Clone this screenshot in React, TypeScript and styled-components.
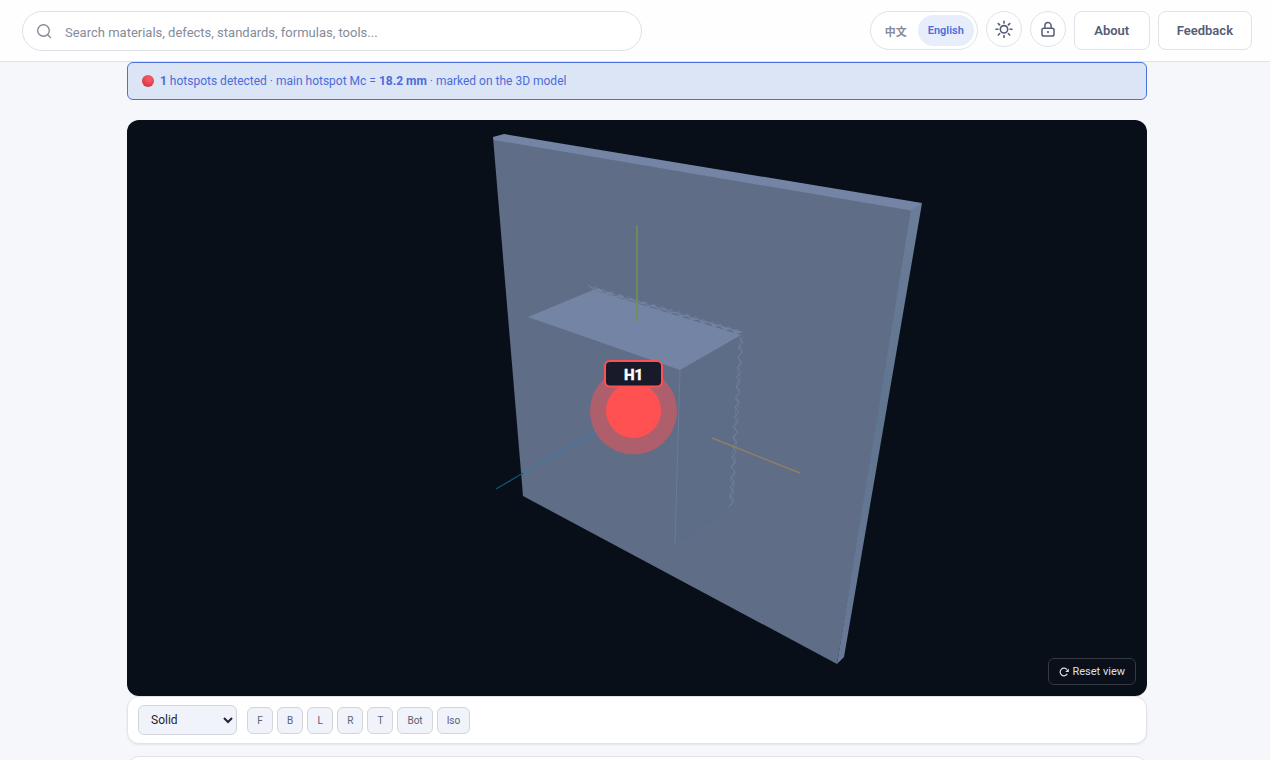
import React from 'react';
import styled, { createGlobalStyle, css } from 'styled-components';

const GlobalStyle = createGlobalStyle`
  *, *::before, *::after { box-sizing: border-box; }
  body {
    margin: 0;
    background: #f5f7fb;
    color: #1e2433;
    font-family: Roboto, 'Noto Sans CJK SC', sans-serif;
    font-size: 13px;
  }
  button, input, select { font-family: inherit; margin: 0; }
`;

const Page = styled.div`
  display: flex;
  flex-direction: column;
  height: 100vh;
  overflow: hidden;
`;

const Header = styled.header`
  display: flex;
  align-items: flex-start;
  justify-content: space-between;
  flex: none;
  gap: 24px;
  height: 62px;
  padding: 11px 18px 0 22px;
  background: #fefefe;
  border-bottom: 1px solid #dfe2e7;
`;

const SearchBox = styled.label`
  display: flex;
  align-items: center;
  flex: 0 1 620px;
  gap: 13px;
  height: 40px;
  padding: 0 13px;
  background: #fff;
  border: 1px solid #dde1e7;
  border-radius: 20px;
  color: #858b9a;
`;

const SearchInput = styled.input`
  flex: 1;
  min-width: 0;
  padding: 2px 0 0;
  border: 0;
  outline: 0;
  background: transparent;
  color: #1e2433;
  font-size: 13px;
  &::placeholder { color: #858b9a; opacity: 1; }
`;

const Actions = styled.div`
  display: flex;
  align-items: flex-start;
  flex: none;
  gap: 8px;
`;

const outlined = css`
  border: 1px solid #dfe2e8;
  background: #fff;
  color: #555c76;
`;

const LanguageSwitch = styled.div`
  ${outlined}
  display: flex;
  width: 108px;
  height: 39px;
  padding: 3px;
  border-radius: 20px;
`;

const LanguageButton = styled.button<{ $active?: boolean }>`
  flex: ${(p) => (p.$active ? '0 0 56px' : '1')};
  padding: 0;
  border: 0;
  border-radius: 16px;
  background: ${(p) => (p.$active ? '#e8edfb' : 'transparent')};
  color: ${(p) => (p.$active ? '#4a6fe0' : '#858b9a')};
  font-size: 11px;
  font-weight: 600;
`;

const RoundButton = styled.button`
  ${outlined}
  display: grid;
  place-items: center;
  width: 36px;
  height: 36px;
  padding: 0;
  border-radius: 50%;
`;

const HeaderButton = styled.button`
  ${outlined}
  min-width: 76px;
  height: 39px;
  padding: 0 18px;
  border-radius: 8px;
  font-size: 13px;
  font-weight: 600;
`;

const Main = styled.main`
  display: flex;
  flex-direction: column;
  flex: 1;
  min-height: 0;
  padding: 0 123px 0 127px;
`;

const Notice = styled.p`
  display: flex;
  align-items: center;
  flex: none;
  gap: 6px;
  height: 38px;
  margin: 0 0 20px;
  padding: 0 14px;
  border: 1px solid #4a72df;
  border-radius: 6px;
  background: #dce5f5;
  color: #4a6cdb;
  font-size: 12px;
`;

const Dot = styled.span`
  width: 12px;
  height: 12px;
  border-radius: 50%;
  background: radial-gradient(circle at 60% 30%, #f25565 0 20%, #dd3a4c 65%, #c42c44);
`;

const Viewer = styled.section`
  position: relative;
  flex: none;
  height: 576px;
  overflow: hidden;
  border-radius: 12px;
  background: #090f18;
`;

const Scene = styled.svg`
  display: block;
  width: 100%;
  height: 100%;
`;

const ResetButton = styled.button`
  position: absolute;
  right: 11px;
  bottom: 11px;
  display: flex;
  align-items: center;
  gap: 3px;
  height: 27px;
  padding: 0 10px;
  border: 1px solid #343a44;
  border-radius: 6px;
  background: #0a0f19;
  color: #dce0e8;
  font-size: 11px;
`;

const Card = styled.section`
  flex: none;
  border: 1px solid #e0e3e9;
  border-radius: 12px;
  background: #fff;
  box-shadow: 0 1px 2px rgba(30, 40, 70, 0.08);
`;

const Toolbar = styled(Card)`
  display: flex;
  align-items: center;
  gap: 10px;
  height: 48px;
  padding: 0 10px;
`;

const NextCard = styled(Card)`
  height: 160px;
  margin-top: 12px;
`;

const ModeSelect = styled.select`
  width: 99px;
  height: 30px;
  padding: 0 0 0 8px;
  border: 1px solid #d2d6dc;
  border-radius: 6px;
  background: #f0f3f9;
  color: #1e2433;
  font-size: 12px;
`;

const Views = styled.div`
  display: flex;
  gap: 4px;
`;

const ViewButton = styled.button`
  min-width: 26px;
  height: 27px;
  padding: 0 9px;
  border: 1px solid #d2d6dc;
  border-radius: 6px;
  background: #f0f3f9;
  color: #5a6078;
  font-size: 10px;
`;

const SearchIcon = () => (
  <svg width="16" height="16" viewBox="0 0 16 16" fill="none" stroke="currentColor" strokeWidth="1.4" strokeLinecap="round" aria-hidden="true">
    <circle cx="7.5" cy="7.5" r="5.8" />
    <path d="M11.8 11.8 14.4 14.4" />
  </svg>
);

const SunIcon = () => (
  <svg width="18" height="18" viewBox="0 0 18 18" fill="none" stroke="currentColor" strokeWidth="1.6" strokeLinecap="round" aria-hidden="true">
    <circle cx="9" cy="9.3" r="3.7" />
    <path d="M9 1.2v1.9M9 15.5v1.9M1 9.3h1.9M15.1 9.3H17M3.3 3.6l1.3 1.3M13.4 13.7l1.3 1.3M3.3 15l1.3-1.3M13.4 4.9l1.3-1.3" />
  </svg>
);

const LockIcon = () => (
  <svg width="16" height="16" viewBox="0 0 16 16" fill="none" stroke="currentColor" strokeWidth="1.5" strokeLinecap="round" strokeLinejoin="round" aria-hidden="true">
    <rect x="2" y="7.2" width="12" height="7.8" rx="1.8" />
    <path d="M4.9 7V4.6a3.1 3.1 0 0 1 6.2 0V7" />
    <circle cx="8" cy="11.1" r="0.4" fill="currentColor" />
  </svg>
);

const ResetIcon = () => (
  <svg width="10" height="10" viewBox="0 0 10 10" fill="none" stroke="currentColor" strokeWidth="1.2" aria-hidden="true">
    <path d="M8.3 6.8A3.8 3.8 0 1 1 8 2.7" />
    <path d="M9.8 1.6v3.4H6.2z" fill="currentColor" stroke="none" />
  </svg>
);

/* Zigzag seam where the block meets the plate. */
const seam = (x1: number, y1: number, x2: number, y2: number, steps: number, size: number) => {
  const length = Math.hypot(x2 - x1, y2 - y1);
  const nx = (y2 - y1) / length;
  const ny = -(x2 - x1) / length;
  return Array.from({ length: steps + 1 }, (_, i) => {
    const t = i / steps;
    const d = i % 2 ? size : 0;
    return `${(x1 + (x2 - x1) * t + nx * d).toFixed(1)},${(y1 + (y2 - y1) * t + ny * d).toFixed(1)}`;
  }).join(' ');
};

const Model = () => (
  <Scene viewBox="127 120 1020 576" role="img" aria-label="3D model with hotspot H1">
    <defs>
      <linearGradient id="side" x1="0" y1="0" x2="0" y2="1">
        <stop offset="0" stopColor="#6b7d99" />
        <stop offset="0.45" stopColor="#60758f" />
        <stop offset="1" stopColor="#687896" />
      </linearGradient>
    </defs>
    <polygon points="493,137 914,210 837,664 523,496" fill="#5f6d86" />
    <polygon points="493,137 504,134 922,203 914,211 494,140" fill="#7484a5" />
    <polygon points="911,210 922,203 844,657 837,664" fill="url(#side)" />
    <polygon points="680,370 740,336 732,507 675,545" fill="#5d6c87" />
    <polyline points={seam(591, 288, 741, 333, 36, 3)} fill="#687793" stroke="#687793" strokeWidth="1" />
    <polygon points="528,317 593,290 741,335 680,370" fill="#7484a5" />
    <polyline points={seam(593, 290, 741, 335, 27, 3)} fill="#7484a5" stroke="#7484a5" strokeWidth="1" />
    <path d="M588 285 595 290" stroke="#6f7e9a" strokeWidth="1.4" />
    <path d="M680 370 675 545" stroke="#6c7a95" />
    <polyline points={seam(739, 337, 729, 507, 34, 4)} fill="none" stroke="#72829c" strokeWidth="1" />
    <polyline points={seam(743, 337, 733, 507, 25, -4)} fill="none" stroke="#6a7b96" strokeWidth="1" />
    <path d="M637 225V322" stroke="#71924f" strokeWidth="1.6" />
    <path d="M637 322V355" stroke="#7186aa" />
    <path d="M712 438 800 473" stroke="#8d8063" strokeWidth="1.4" />
    <path d="M496 489 523 473" stroke="#0e5577" strokeWidth="1.3" />
    <path d="M523 473 598 431" stroke="#3f7da8" strokeWidth="1.3" />
    <circle cx="633.5" cy="411" r="43.5" fill="#ff5050" fillOpacity="0.5" />
    <circle cx="633.5" cy="410.5" r="27.5" fill="#ff5151" />
    <rect x="605" y="361" width="57" height="25.5" rx="5" fill="#181a29" stroke="#ff5151" strokeWidth="2" />
    <text x="633.5" y="380" textAnchor="middle" fill="#fff" stroke="#fff" strokeWidth="0.5" fontFamily="Roboto, sans-serif" fontSize="15" fontWeight="700">H1</text>
  </Scene>
);

const views = ['F', 'B', 'L', 'R', 'T', 'Bot', 'Iso'];

export default function App() {
  return (
    <Page>
      <GlobalStyle />
      <Header>
        <SearchBox>
          <SearchIcon />
          <SearchInput type="text" aria-label="Search" placeholder="Search materials, defects, standards, formulas, tools..." />
        </SearchBox>
        <Actions>
          <LanguageSwitch>
            <LanguageButton type="button">中文</LanguageButton>
            <LanguageButton type="button" $active>English</LanguageButton>
          </LanguageSwitch>
          <RoundButton type="button" aria-label="Toggle theme"><SunIcon /></RoundButton>
          <RoundButton type="button" aria-label="Sign in"><LockIcon /></RoundButton>
          <HeaderButton type="button">About</HeaderButton>
          <HeaderButton type="button">Feedback</HeaderButton>
        </Actions>
      </Header>
      <Main>
        <Notice>
          <Dot />
          <span><b>1</b> hotspots detected · main hotspot Mc = <b>18.2 mm</b> · marked on the 3D model</span>
        </Notice>
        <Viewer>
          <Model />
          <ResetButton type="button"><ResetIcon />Reset view</ResetButton>
        </Viewer>
        <Toolbar>
          <ModeSelect aria-label="Display mode" defaultValue="Solid">
            <option>Solid</option>
            <option>Wireframe</option>
          </ModeSelect>
          <Views>
            {views.map((view) => <ViewButton type="button" key={view}>{view}</ViewButton>)}
          </Views>
        </Toolbar>
        <NextCard />
      </Main>
    </Page>
  );
}
